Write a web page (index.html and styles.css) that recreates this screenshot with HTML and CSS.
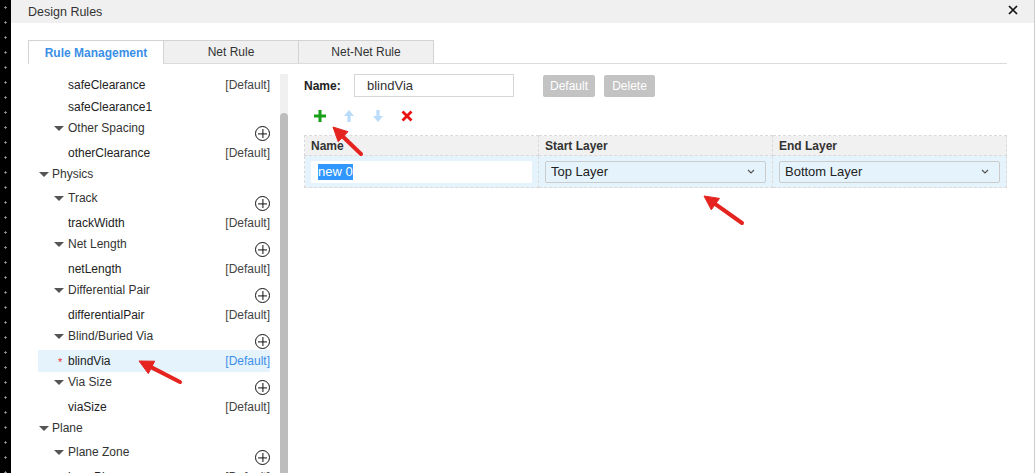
FILE: index.html
```html
<!DOCTYPE html>
<html>
<head>
<meta charset="utf-8">
<link rel="stylesheet" href="styles.css">
</head>
<body>
<div class="screen">
  <div class="desk"></div>
  <div class="dialog">
    <div class="titlebar">
      <span class="title">Design Rules</span>
      <svg class="close" width="10" height="10" viewBox="0 0 10 10"><path d="M1 1L9 9M9 1L1 9" stroke="#111" stroke-width="1.7"/></svg>
    </div>
    <div class="body">
      <div class="tabs">
        <div class="tab active">Rule Management</div>
        <div class="tab">Net Rule</div>
        <div class="tab">Net-Net Rule</div>
      </div>
      <div class="content">
        <div class="tree-panel">
          <div class="tree">
            <div class="row leaf"><span class="mark"></span><span class="nm">safeClearance</span><span class="def">[Default]</span></div>
            <div class="row leaf"><span class="mark"></span><span class="nm">safeClearance1</span></div>
            <div class="row group"><span class="lbl"><i class="tri"></i>Other Spacing</span><span class="add"></span></div>
            <div class="row leaf"><span class="mark"></span><span class="nm">otherClearance</span><span class="def">[Default]</span></div>
            <div class="row group top"><span class="lbl"><i class="tri"></i>Physics</span></div>
            <div class="row group"><span class="lbl"><i class="tri"></i>Track</span><span class="add"></span></div>
            <div class="row leaf"><span class="mark"></span><span class="nm">trackWidth</span><span class="def">[Default]</span></div>
            <div class="row group"><span class="lbl"><i class="tri"></i>Net Length</span><span class="add"></span></div>
            <div class="row leaf"><span class="mark"></span><span class="nm">netLength</span><span class="def">[Default]</span></div>
            <div class="row group"><span class="lbl"><i class="tri"></i>Differential Pair</span><span class="add"></span></div>
            <div class="row leaf"><span class="mark"></span><span class="nm">differentialPair</span><span class="def">[Default]</span></div>
            <div class="row group"><span class="lbl"><i class="tri"></i>Blind/Buried Via</span><span class="add"></span></div>
            <div class="row leaf sel"><span class="mark">*</span><span class="nm">blindVia</span><span class="def">[Default]</span></div>
            <div class="row group"><span class="lbl"><i class="tri"></i>Via Size</span><span class="add"></span></div>
            <div class="row leaf"><span class="mark"></span><span class="nm">viaSize</span><span class="def">[Default]</span></div>
            <div class="row group top"><span class="lbl"><i class="tri"></i>Plane</span></div>
            <div class="row group"><span class="lbl"><i class="tri"></i>Plane Zone</span><span class="add"></span></div>
            <div class="row leaf"><span class="mark"></span><span class="nm">layerPlane</span><span class="def">[Default]</span></div>
          </div>
          <div class="scrollbar"><div class="thumb"></div></div>
        </div>
        <div class="editor">
          <div class="name-row">
            <span class="name-label">Name:</span>
            <div class="name-input">blindVia</div>
            <span class="btn btn-default">Default</span>
            <span class="btn btn-delete">Delete</span>
          </div>
          <div class="toolbar">
            <svg class="ico" width="12" height="12" viewBox="0 0 12 12"><path d="M6 0V12M0 6H12" stroke="#17a017" stroke-width="3"/></svg>
            <svg class="ico" width="12" height="12" viewBox="0 0 12 12"><path d="M6 0L11 6H7.6V12H4.4V6H1Z" fill="#b9dcfa"/></svg>
            <svg class="ico" width="12" height="12" viewBox="0 0 12 12"><path d="M6 12L11 6H7.6V0H4.4V6H1Z" fill="#b9dcfa"/></svg>
            <svg class="ico" width="12" height="12" viewBox="0 0 12 12"><path d="M1.5 1.5L10.5 10.5M10.5 1.5L1.5 10.5" stroke="#e81212" stroke-width="2.8"/></svg>
          </div>
          <table class="grid">
            <thead>
              <tr><th>Name</th><th>Start Layer</th><th>End Layer</th></tr>
            </thead>
            <tbody>
              <tr>
                <td><div class="cell-input"><span class="selected">new 0</span></div></td>
                <td><div class="select"><span>Top Layer</span><svg width="8" height="5" viewBox="0 0 8 5"><path d="M1 1L4 4L7 1" stroke="#555" stroke-width="1.2" fill="none"/></svg></div></td>
                <td><div class="select"><span>Bottom Layer</span><svg width="8" height="5" viewBox="0 0 8 5"><path d="M1 1L4 4L7 1" stroke="#555" stroke-width="1.2" fill="none"/></svg></div></td>
              </tr>
            </tbody>
          </table>
        </div>
      </div>
    </div>
  </div>
  <svg class="arrows" width="1035" height="473" viewBox="0 0 1035 473">
    <g fill="#e52420" stroke="#e52420">
      <line x1="361" y1="154" x2="343" y2="136.7" stroke-width="4" stroke-linecap="round"/>
      <polygon points="333,127 348,131.7 338.2,141.7" stroke-width="1" stroke-linejoin="round"/>
      <line x1="742" y1="223" x2="715.4" y2="204.1" stroke-width="4" stroke-linecap="round"/>
      <polygon points="704,196 719.5,198.4 711.3,209.8" stroke-width="1" stroke-linejoin="round"/>
      <line x1="180" y1="382" x2="151.5" y2="367.4" stroke-width="4" stroke-linecap="round"/>
      <polygon points="139,361 154.7,361.2 148.3,373.6" stroke-width="1" stroke-linejoin="round"/>
    </g>
  </svg>
</div>
</body>
</html>
```

FILE: styles.css
```css
html, body {
  margin: 0;
  height: 473px;
  overflow: hidden;
  background: #fff;
  font-family: "Liberation Sans", Arial, sans-serif;
}

.screen {
  position: relative;
  display: flex;
  height: 473px;
  overflow: hidden;
}

.desk {
  width: 11px;
  flex: none;
  background-color: #000;
  background-image: radial-gradient(circle, #9a9a9a 0.9px, transparent 1.3px);
  background-size: 11px 15px;
  background-position: 0 0;
}

.dialog {
  flex: 1;
  display: flex;
  flex-direction: column;
  border-right: 1px solid #cdcdcd;
  min-width: 0;
}

.titlebar {
  height: 23px;
  flex: none;
  background: #f0f0f0;
  display: flex;
  align-items: center;
  justify-content: space-between;
  padding: 0 16px 0 17px;
  font-size: 12.5px;
  color: #333;
}

.close {
  display: block;
  margin-top: -4px;
}

.body {
  flex: 1;
  display: flex;
  flex-direction: column;
  padding: 17px 27px 0 17px;
  min-height: 0;
}

.tabs {
  display: flex;
  height: 23px;
  border-bottom: 1px solid #dcdcdc;
  flex: none;
}

.tab {
  box-sizing: border-box;
  width: 136px;
  height: 23px;
  margin-right: -1px;
  border: 1px solid #d3d3d3;
  border-bottom: none;
  background: #f0f0f0;
  color: #333;
  font-size: 12px;
  display: flex;
  align-items: center;
  justify-content: center;
}

.tab.active {
  background: #fff;
  color: #3b8fe6;
  font-weight: bold;
  height: 24px;
  margin-bottom: -1px;
}

.content {
  flex: 1;
  display: flex;
  min-height: 0;
}

.tree-panel {
  width: 260px;
  flex: none;
  display: flex;
  padding-top: 10px;
}

.tree {
  flex: 1;
  padding-right: 10px;
}

.row {
  display: flex;
  font-size: 12px;
  color: #222;
  margin-left: 10px;
}

.leaf {
  height: 22px;
  align-items: center;
  padding-left: 20px;
}

.leaf .mark {
  width: 10px;
  color: #e53030;
  font-size: 11px;
  line-height: 1;
  padding-top: 2px;
}

.leaf .def {
  margin-left: auto;
  color: #444;
}

.leaf.sel {
  background: #e5f3fd;
}

.leaf.sel .def {
  color: #3d8fe8;
}

.group {
  height: 24px;
  align-items: flex-start;
  padding-left: 16px;
}

.group.top {
  padding-left: 1px;
}

.group .lbl {
  display: flex;
  align-items: center;
  height: 20px;
  color: #333;
}

.tri {
  width: 0;
  height: 0;
  border-left: 5px solid transparent;
  border-right: 5px solid transparent;
  border-top: 5px solid #555;
  margin-right: 4px;
  margin-top: 1px;
}

.group.top .tri {
  margin-right: 3px;
}

.add {
  margin-left: auto;
  margin-top: 8px;
  width: 13px;
  height: 13px;
  border: 1.2px solid #111;
  border-radius: 50%;
  position: relative;
}

.add::before,
.add::after {
  content: "";
  position: absolute;
  background: #111;
}

.add::before {
  left: 2px;
  right: 2px;
  top: 50%;
  height: 1.2px;
  transform: translateY(-50%);
}

.add::after {
  top: 2px;
  bottom: 2px;
  left: 50%;
  width: 1.2px;
  transform: translateX(-50%);
}

.scrollbar {
  width: 8px;
  flex: none;
  background: #f0f0f0;
  display: flex;
  flex-direction: column;
  padding-top: 39px;
}

.thumb {
  flex: 1;
  background: #bdbdbd;
  border-radius: 4px 4px 0 0;
}

.editor {
  flex: 1;
  padding: 10px 0 0 16px;
  min-width: 0;
}

.name-row {
  display: flex;
  align-items: center;
  height: 23px;
}

.name-label {
  width: 50px;
  font-size: 12px;
  font-weight: bold;
  color: #222;
}

.name-input {
  box-sizing: border-box;
  width: 160px;
  height: 23px;
  border: 1px solid #d6d6d6;
  padding-left: 12px;
  font-size: 13px;
  color: #333;
  display: flex;
  align-items: center;
}

.btn {
  height: 22px;
  display: flex;
  align-items: center;
  justify-content: center;
  background: #c3c3c3;
  color: #fff;
  font-size: 12px;
  border-radius: 2px;
}

.btn-default {
  width: 52px;
  margin-left: 29px;
}

.btn-delete {
  width: 51px;
  margin-left: 9px;
}

.toolbar {
  display: flex;
  align-items: center;
  height: 24px;
  margin-top: 7px;
  padding-left: 10px;
  gap: 17px;
}

.ico {
  display: block;
}

.grid {
  margin-top: 7px;
  width: 703px;
  border-collapse: collapse;
  table-layout: fixed;
  border: 1px dashed #d6d6d6;
}

.grid th,
.grid td {
  border: 1px dashed #dadada;
  padding: 0 6px 0 6px;
  text-align: left;
}

.grid th {
  height: 19px;
  background: #f1f1f1;
  font-size: 12px;
  font-weight: bold;
  color: #333;
}

.grid td {
  height: 31px;
  background: #e5f4fc;
}

.cell-input {
  box-sizing: border-box;
  height: 22px;
  background: #fff;
  border-radius: 2px;
  padding-left: 7px;
  display: flex;
  align-items: center;
  font-size: 13px;
}

.selected {
  background: #3297fd;
  color: #fff;
  line-height: 16px;
}

.select {
  box-sizing: border-box;
  height: 22px;
  border: 1px solid #cbcbcb;
  border-radius: 2px;
  padding: 0 10px 0 5px;
  display: flex;
  align-items: center;
  justify-content: space-between;
  font-size: 13px;
  color: #222;
}

.arrows {
  position: absolute;
  left: 0;
  top: 0;
  pointer-events: none;
}
```
